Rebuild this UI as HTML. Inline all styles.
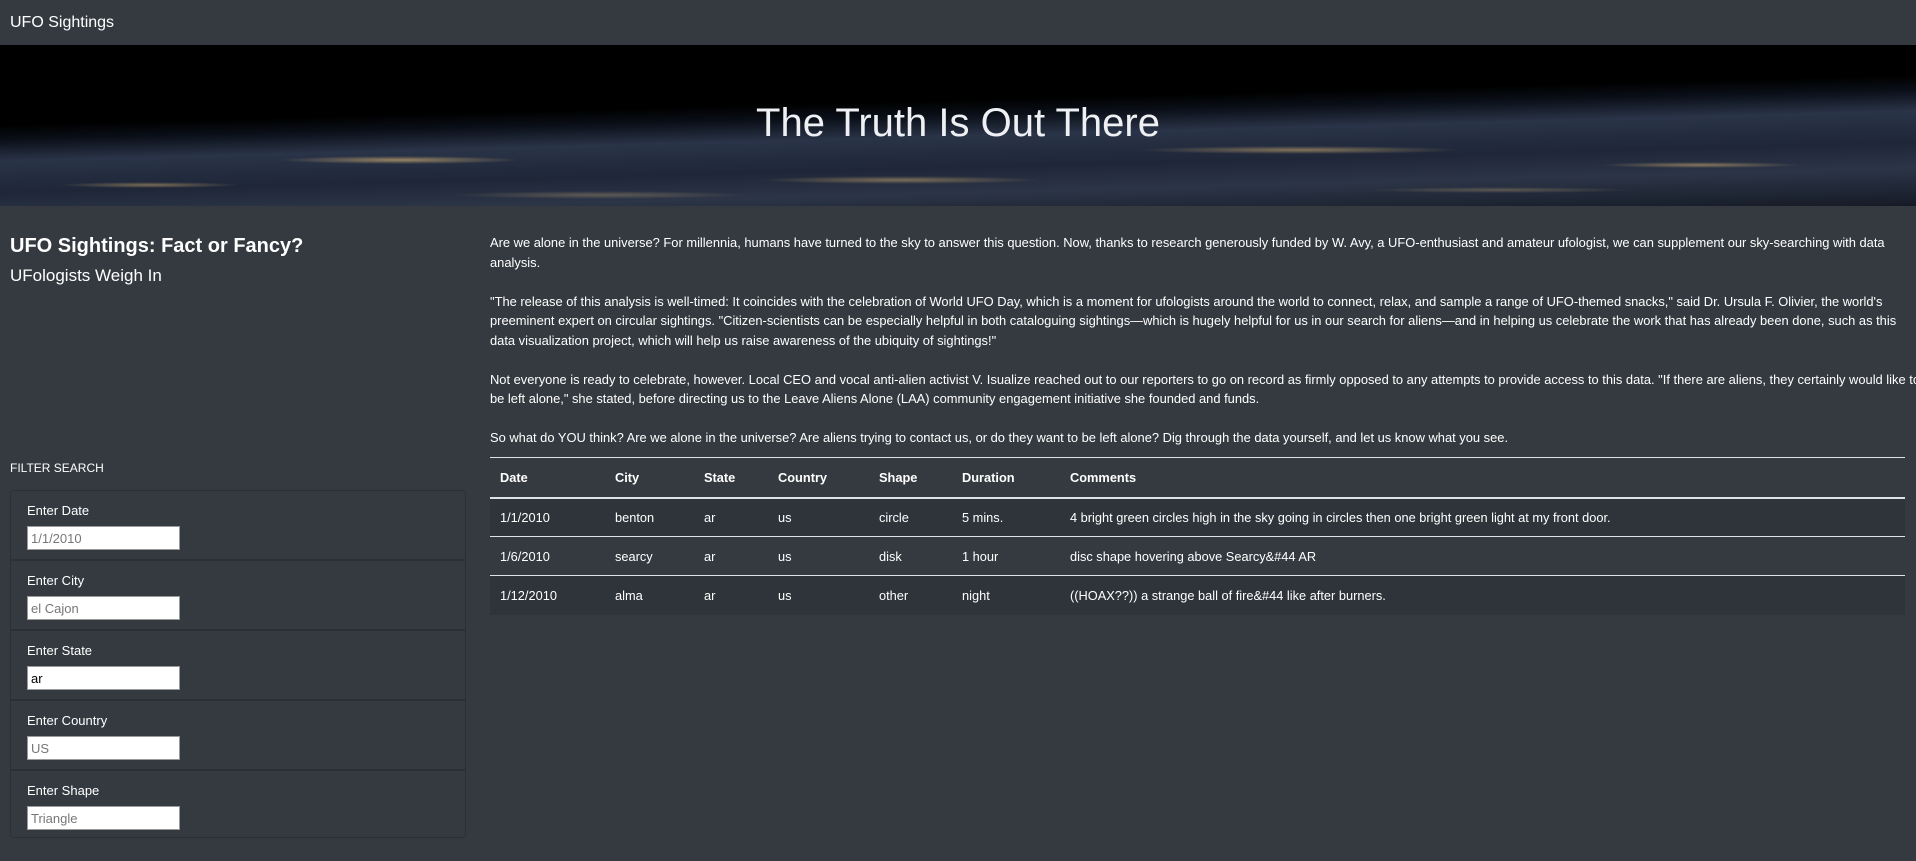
<!DOCTYPE html>
<html><head><meta charset="utf-8"><style>
*{box-sizing:border-box;margin:0;padding:0}
body{width:1916px;height:861px;overflow:hidden;background:#343a40;color:#fff;font-family:"Liberation Sans",sans-serif;position:relative}
.nav{height:45px;background:#343a40;font-size:16px;padding:14px 0 0 10px}
.banner{position:absolute;top:45px;left:0;width:1916px;height:161px;overflow:hidden;
background:
radial-gradient(ellipse 120px 4px at 400px 115px,rgba(230,190,120,.6),transparent),
radial-gradient(ellipse 160px 4px at 1300px 105px,rgba(230,190,120,.5),transparent),
radial-gradient(ellipse 140px 4px at 900px 135px,rgba(230,190,120,.45),transparent),
radial-gradient(ellipse 100px 3px at 1700px 120px,rgba(230,190,120,.5),transparent),
radial-gradient(ellipse 90px 3px at 150px 140px,rgba(230,190,120,.45),transparent),
radial-gradient(ellipse 150px 4px at 600px 150px,rgba(200,170,120,.35),transparent),
radial-gradient(ellipse 130px 3px at 1500px 145px,rgba(200,170,120,.35),transparent),
linear-gradient(178.5deg,#000 0,#000 38%,#0a0f18 45%,#2a3448 55%,#1e2638 70%,#2c3547 82%,#151b26 100%)}
.banner h1{position:absolute;width:100%;text-align:center;top:56px;font-weight:300;font-size:40px;color:#eef0f3}
.left{position:absolute;left:10px;top:235px}
.left h2{font-size:20px;font-weight:bold}
.left h3{font-size:17px;font-weight:normal;margin-top:8px}
.fs{position:absolute;left:10px;top:461px;font-size:12px}
.panel{position:absolute;left:10px;top:490px;width:456px;height:348px;border:1px solid #2c3035;border-radius:3px}
.row{height:70px;border-bottom:2px solid #2c3035;padding:12px 0 0 16px;font-size:13px}
.row:last-child{border-bottom:none}
.row input{display:block;margin-top:8px;width:153px;height:24px;border:1px solid #999;font:13px "Liberation Sans",sans-serif;padding-left:3px;color:#777}
.txt{position:absolute;left:490px;top:233px;width:1420px;font-size:12.9px;line-height:19.5px;white-space:nowrap}
.txt p{margin-bottom:19.5px}
table{position:absolute;left:490px;top:457px;width:1415px;border-collapse:collapse;font-size:12.8px}
th{text-align:left;height:40px;border-top:1px solid #dee2e6;border-bottom:2px solid #dee2e6;padding-left:10px;font-weight:bold}
td{height:39px;padding-left:10px;border-bottom:1px solid #dee2e6}
tr:last-child td{border-bottom:none}
tbody tr:nth-child(odd){background:#2f343a}
</style></head><body>
<div class="nav">UFO Sightings</div>
<div class="banner"><h1>The Truth Is Out There</h1></div>
<div class="left"><h2>UFO Sightings: Fact or Fancy?</h2><h3>UFologists Weigh In</h3></div>
<div class="fs">FILTER SEARCH</div>
<div class="panel">
<div class="row">Enter Date<input value="1/1/2010"></div>
<div class="row">Enter City<input value="el Cajon"></div>
<div class="row">Enter State<input value="ar" style="color:#000"></div>
<div class="row">Enter Country<input value="US"></div>
<div class="row">Enter Shape<input value="Triangle"></div>
</div>
<div class="txt">
<p>Are we alone in the universe? For millennia, humans have turned to the sky to answer this question. Now, thanks to research generously funded by W. Avy, a UFO-enthusiast and amateur ufologist, we can supplement our sky-searching with data<br>analysis.</p>
<p>"The release of this analysis is well-timed: It coincides with the celebration of World UFO Day, which is a moment for ufologists around the world to connect, relax, and sample a range of UFO-themed snacks," said Dr. Ursula F. Olivier, the world's<br>preeminent expert on circular sightings. "Citizen-scientists can be especially helpful in both cataloguing sightings—which is hugely helpful for us in our search for aliens—and in helping us celebrate the work that has already been done, such as this<br>data visualization project, which will help us raise awareness of the ubiquity of sightings!"</p>
<p>Not everyone is ready to celebrate, however. Local CEO and vocal anti-alien activist V. Isualize reached out to our reporters to go on record as firmly opposed to any attempts to provide access to this data. "If there are aliens, they certainly would like to<br>be left alone," she stated, before directing us to the Leave Aliens Alone (LAA) community engagement initiative she founded and funds.</p>
<p>So what do YOU think? Are we alone in the universe? Are aliens trying to contact us, or do they want to be left alone? Dig through the data yourself, and let us know what you see.</p>
</div>
<table>
<colgroup><col style="width:115px"><col style="width:89px"><col style="width:74px"><col style="width:101px"><col style="width:83px"><col style="width:108px"><col></colgroup>
<thead><tr><th>Date</th><th>City</th><th>State</th><th>Country</th><th>Shape</th><th>Duration</th><th>Comments</th></tr></thead>
<tbody>
<tr><td>1/1/2010</td><td>benton</td><td>ar</td><td>us</td><td>circle</td><td>5 mins.</td><td>4 bright green circles high in the sky going in circles then one bright green light at my front door.</td></tr>
<tr><td>1/6/2010</td><td>searcy</td><td>ar</td><td>us</td><td>disk</td><td>1 hour</td><td>disc shape hovering above Searcy&amp;#44 AR</td></tr>
<tr><td>1/12/2010</td><td>alma</td><td>ar</td><td>us</td><td>other</td><td>night</td><td>((HOAX??)) a strange ball of fire&amp;#44 like after burners.</td></tr>
</tbody></table>
</body></html>
